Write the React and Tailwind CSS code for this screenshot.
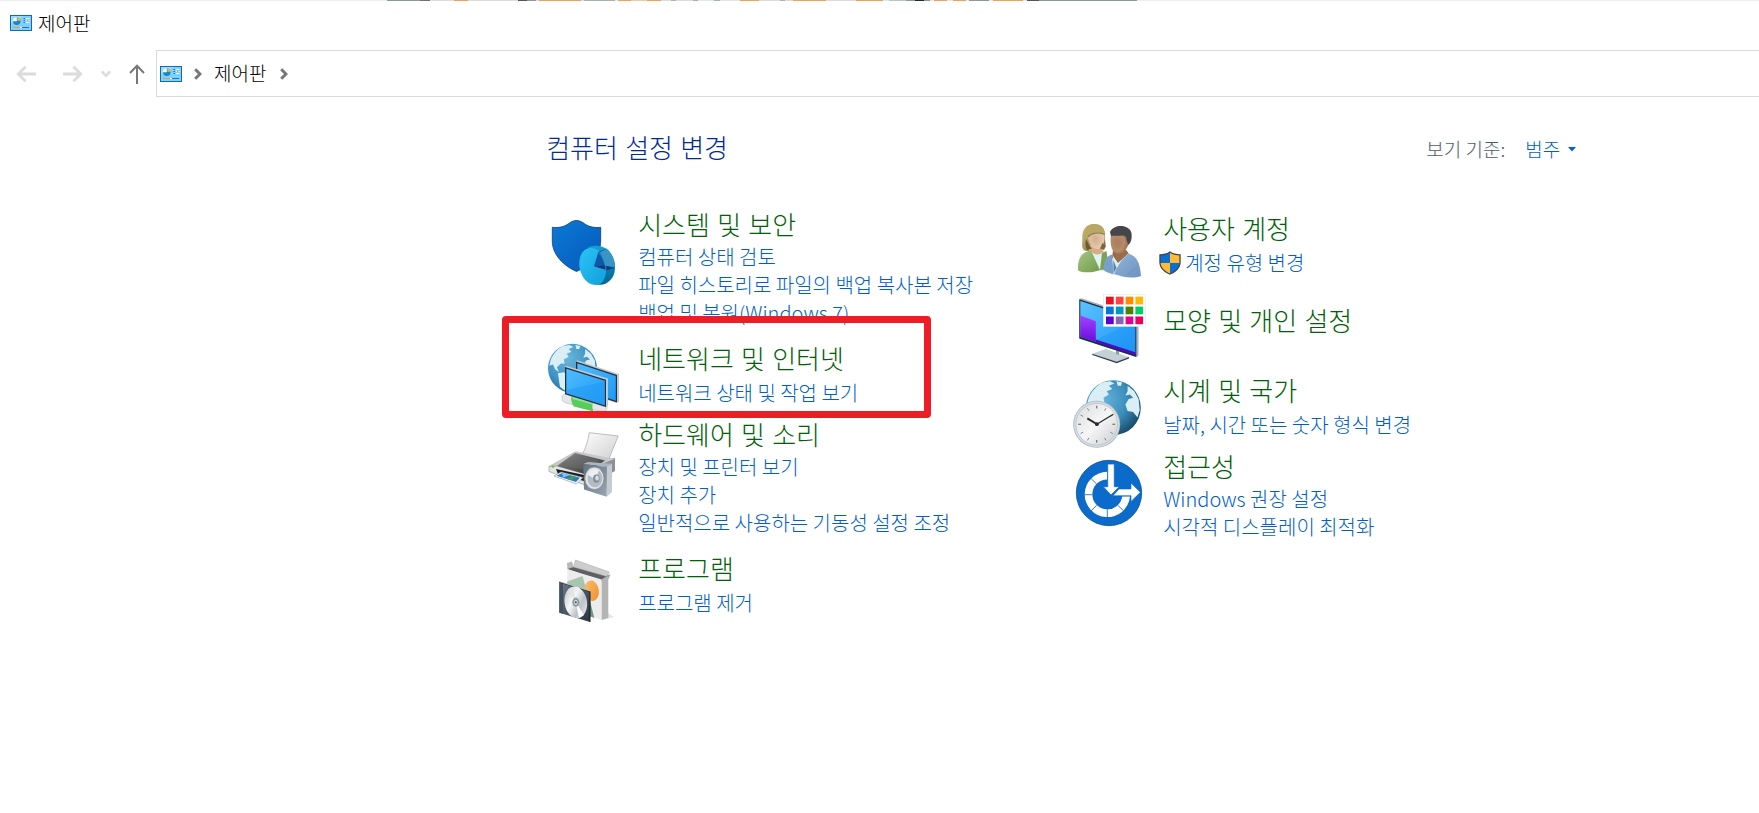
// src/App.jsx
import React from 'react';

// [x, width, color] of the strip behind the window's top edge
const edgeColors = [
  [0, 33, '#8a9a98'], [33, 10, '#77716e'], [43, 24, '#dcdcdc'], [67, 14, '#f3a055'], [81, 50, '#dcdcdc'],
  [131, 9, '#56565a'], [140, 9, '#8a9a98'], [149, 3, '#dcdcdc'], [152, 42, '#f3a055'], [194, 3, '#dcdcdc'],
  [197, 31, '#a3b3af'], [228, 3, '#e8e8e8'], [231, 13, '#f3a055'], [244, 16, '#f5c9a0'], [260, 14, '#f3a055'],
  [274, 10, '#dcdcdc'], [284, 5, '#a3b3af'], [289, 17, '#dcdcdc'], [306, 5, '#a3b3af'], [311, 16, '#e4e6e6'],
  [327, 6, '#a3b3af'], [333, 20, '#e4e4e4'], [353, 19, '#f3a055'], [372, 21, '#dcdcdc'], [393, 5, '#a3b3af'],
  [398, 8, '#dcdcdc'], [406, 33, '#f3a055'], [439, 30, '#dcdcdc'], [469, 27, '#f3a055'], [496, 6, '#e8e8e8'],
  [502, 17, '#b9c5c3'], [519, 9, '#8a9a98'], [528, 9, '#22282c'], [537, 6, '#8a9a98'], [543, 4, '#e8e8e8'],
  [547, 13, '#f3a055'], [560, 6, '#e8e8e8'], [566, 13, '#f3a055'], [579, 3, '#e8e8e8'], [582, 20, '#8a9a98'],
  [602, 4, '#e8e8e8'], [606, 30, '#f3a055'], [636, 4, '#e8e8e8'], [640, 12, '#56565a'], [652, 98, '#8a9a98'],
];

const PanelIcon = () => (
  <svg width="22" height="16" viewBox="0 0 22 16" className="shrink-0" aria-hidden="true">
    <rect width="22" height="16" fill="#0f6cae" />
    <rect x="1" y="1" width="20" height="14" fill="#7fd0fa" />
    <path d="M1 15V9L14 1H1Z" fill="#9bdcfc" />
    <circle cx="6.8" cy="6.3" r="3.7" fill="#1487d0" />
    <path d="M6.8 6.3V2.2A4.1 4.1 0 0 0 2.7 6.3Z" fill="#f4fbff" />
    <path d="M7.3 5.8V2.4A3.6 3.6 0 0 1 10.6 5.8Z" fill="#f9b13c" />
    <path d="M13.5 3.5H15M13.5 5.5H15M13.5 7.5H15" stroke="#1478bc" />
    <path d="M16 3.5H19.5M16 5.5H19.5M16 7.5H19.5" stroke="#e8f7ff" />
    <path d="M17 5.5H18.3" stroke="#f08b2c" />
    <path d="M3 12.5H10" stroke="#f29a2e" />
    <path d="M10 12.5H12" stroke="#fff" />
    <path d="M12 12.5H19" stroke="#1478bc" />
  </svg>
);

const Crumb = () => (
  <svg width="8" height="12" viewBox="0 0 8 12" fill="none" className="shrink-0" aria-hidden="true">
    <path d="M1.2 1.2L6 6L1.2 10.8" stroke="#777" strokeWidth="3" />
  </svg>
);

// Continents shared by both globe icons, drawn for a circle of radius 25 at the origin
const Land = () => (
  <g fill="#d9eff5">
    <path d="M-10 -23C-14 -21 -19 -16 -22 -10L-24 -3L-20 -4L-18 1L-14 4L-16 -1L-12 -5L-8 -5L-9 -9L-4 -12L-6 -15L-1 -17L-4 -20L1 -22L-3 -24Z" />
    <path d="M-15 5L-9 4L-4 8L-2 12L-6 18L-8 23L-13 19L-14 12Z" />
    <path d="M3 -24L8 -23L7 -20L4 -20Z" />
    <path d="M13 -20L19 -15L23 -8L24 2L22 9L18 4L13 3L11 -3L14 -8L18 -9L15 -12L11 -11L13 -15Z" />
  </g>
);

const Icon = ({ className, children }) => (
  <svg width="72" height="72" viewBox="0 0 72 72" className={`shrink-0 overflow-visible ${className}`} aria-hidden="true">
    {children}
  </svg>
);

const SystemIcon = (
  <>
    <defs>
      <linearGradient id="sysShield" x1="0" y1="0" x2="1" y2="1">
        <stop offset="0" stopColor="#0b79d6" />
        <stop offset="1" stopColor="#0559b8" />
      </linearGradient>
      <linearGradient id="sysPie" x1="0" y1="0" x2="1" y2="1">
        <stop offset="0" stopColor="#2bc4f6" />
        <stop offset="1" stopColor="#119fdc" />
      </linearGradient>
      <linearGradient id="sysEdge" x1="0" y1="0" x2="0" y2="1">
        <stop offset="0" stopColor="#12a0d8" />
        <stop offset="1" stopColor="#046390" />
      </linearGradient>
    </defs>
    <path d="M30.5 3.5C25 3.5 23 7.5 17 9.5C13 10.7 9 10.7 6.3 10.3V24C6.3 38 18 49 30.5 54.5C43 49 54.7 38 54.7 24V10.3C52 10.7 48 10.7 44 9.5C38 7.5 36 3.5 30.5 3.5Z" fill="url(#sysShield)" stroke="#0a3c74" strokeWidth=".8" />
    <path d="M42 30.5C46 28.5 53 28 58 30.5C65 34 69 42 69 50C69 58 66 63 60 66.5C57 68 53 68 50 67.5Z" fill="url(#sysEdge)" />
    <path d="M45 31C54 31 60.5 41 60.3 51C60 61 57 68 50 68C40 68 33.3 57 33.3 47C33.3 37 38 31 45 31Z" fill="url(#sysPie)" />
    <path d="M48 49.7L52.5 35L60.7 31.6L68 49Z" fill="#0c4a94" />
    <path d="M60.7 31.8C66 36 69 43 69 50L59 49C58.5 44 56 38 53.5 35.5Z" fill="#3796c4" />
    <path d="M48 49.7L52.6 36C57 40 59.5 45 60 51.5Z" fill="#0d59a8" />
    <path d="M48 49.7L60 53.5L68.5 51L59 48.5Z" fill="#083b84" />
    <path d="M48 49.7L60 53.3M52.5 35.5C57 40 59.5 46 60 53" stroke="#56b9ea" strokeWidth=".6" fill="none" />
  </>
);

const NetworkIcon = (
  <>
    <defs>
      <radialGradient id="netSea" cx=".4" cy=".3" r=".75">
        <stop offset="0" stopColor="#6bb5dc" />
        <stop offset=".6" stopColor="#3d94c6" />
        <stop offset="1" stopColor="#256d9c" />
      </radialGradient>
      <linearGradient id="netScreen" x1="0" y1="0" x2="1" y2="1">
        <stop offset="0" stopColor="#4fbcff" />
        <stop offset="1" stopColor="#1e9af6" />
      </linearGradient>
    </defs>
    <circle cx="26.5" cy="25.3" r="24.5" fill="url(#netSea)" />
    <g transform="translate(26.5 25.3) scale(.97)"><Land /></g>
    <path d="M30 18L32 17.5L73 31V59L70.5 60L30 47Z" fill="#c3c9cd" />
    <path d="M30 18.5L71 32V59.5L30 46Z" fill="#233240" />
    <path d="M31.3 20.3L69.8 33V57.8L31.3 45Z" fill="url(#netScreen)" />
    <path d="M16 55C16 51 19 50 23 51L58 61C61 62 62 64 60 67L58 69L20 60C17 59 16 58 16 55Z" fill="#e4e7e8" stroke="#b3b9bc" strokeWidth=".6" />
    <path d="M26 52L48 57.5C46 60 46 65 47.5 68.5L28 63.5C25 60 24.5 55 26 52Z" fill="#56cd5a" />
    <path d="M26.5 55L46.5 60.5" stroke="#8be48a" strokeWidth="2" />
    <path d="M19 23.5L21 23L62 35.5V63L59.5 64.5L19 51.5Z" fill="#c3c9cd" />
    <path d="M19 24L60 36.8V64L19 51.2Z" fill="#233240" />
    <path d="M20.3 25.7L58.8 37.7V62.3L20.3 50.2Z" fill="url(#netScreen)" />
    <path d="M20.3 50.2V47L57 39V37.2L58.8 37.7V62.3Z" fill="#1f97f2" opacity=".5" />
  </>
);

const HardwareIcon = (
  <>
    <defs>
      <linearGradient id="hwPaper" x1="0" y1="0" x2="1" y2="1">
        <stop offset="0" stopColor="#fdfdfd" />
        <stop offset="1" stopColor="#cfcfcf" />
      </linearGradient>
      <linearGradient id="hwBody" x1="0" y1="0" x2="1" y2="1">
        <stop offset="0" stopColor="#8f8f8f" />
        <stop offset="1" stopColor="#2d2d2d" />
      </linearGradient>
      <linearGradient id="hwSpeaker" x1="0" y1="0" x2="1" y2="1">
        <stop offset="0" stopColor="#65727e" />
        <stop offset="1" stopColor="#98a6b2" />
      </linearGradient>
    </defs>
    <path d="M43.3 3.7L72.3 7C69 15 65 24 62.3 32L36.5 25C40 19 42 11 43.3 3.7Z" fill="url(#hwPaper)" stroke="#a5a5a5" strokeWidth=".7" />
    <path d="M56 31L69 29V42L60 47Z" fill="#8d9092" />
    <path d="M3 37L28 23C30 22.3 32 22.6 34 23.2L69 30L58 34L40 46.5L3 40Z" fill="#c5c7c8" />
    <path d="M3 37.5L11 37L39 45V56L3 42.5Z" fill="#e3e4e4" stroke="#909090" strokeWidth=".6" />
    <path d="M11 37L29 24L59 31.5L39 45Z" fill="url(#hwBody)" />
    <path d="M17 36L31 26L54 31.5L39 41Z" fill="#6e6e6e" opacity=".45" />
    <path d="M10 40L38 46V52L12 45Z" fill="#1b1c1d" />
    <circle cx="7" cy="37.6" r="1.4" fill="#83c044" />
    <path d="M8 47L15 43L37 48.5L30.5 55Z" fill="#f5f8fa" stroke="#8d9397" strokeWidth=".6" />
    <path d="M10.5 46.8L16 44L34 48.7L30 53Z" fill="#3478bd" />
    <path d="M16 44L24 46L17 48.5Z" fill="#82c4ef" />
    <path d="M26 47L30 48L26 51L21 50Z" fill="#43a04d" />
    <path d="M60 37.5L66 34.5V63L60.7 67.7Z" fill="#c4ccd2" />
    <path d="M37.3 35L42 33L66 34.7L61 38Z" fill="#aab6bf" />
    <path d="M37.3 35L61 38L60.7 67.7L38 60.5Z" fill="url(#hwSpeaker)" />
    <ellipse cx="48.4" cy="49.3" rx="9.6" ry="11.2" fill="#e0e4e8" stroke="#717c87" strokeWidth=".6" />
    <ellipse cx="49" cy="49.3" rx="7.4" ry="9" fill="#b3bcc4" />
    <path d="M42 46L49 50L53 41.5A7.4 9 0 0 0 42 46Z" fill="#edf0f2" />
    <ellipse cx="50.3" cy="49.6" rx="3.2" ry="4.2" fill="#838e99" />
    <ellipse cx="51" cy="49" rx="1.8" ry="2.6" fill="#d9dee2" />
  </>
);

const ProgramsIcon = (
  <>
    <defs>
      <linearGradient id="progDisc" x1="0" y1="0" x2="1" y2="1">
        <stop offset="0" stopColor="#b8bdc1" />
        <stop offset=".4" stopColor="#f6f8f9" />
        <stop offset=".65" stopColor="#bcc3c7" />
        <stop offset="1" stopColor="#f0f2f3" />
      </linearGradient>
      <linearGradient id="progCase" x1="0" y1="0" x2="1" y2="1">
        <stop offset="0" stopColor="#6b7986" />
        <stop offset="1" stopColor="#2b3641" />
      </linearGradient>
      <linearGradient id="progSpot" x1="0" y1="0" x2="1" y2="1">
        <stop offset="0" stopColor="#f9c06d" />
        <stop offset="1" stopColor="#ee8f2c" />
      </linearGradient>
    </defs>
    <path d="M56 65L68 62L62 58Z" fill="#e6e6e6" />
    <path d="M21.3 14L21 8L26 6.5L28 13Z" fill="#b9b9b9" />
    <path d="M21.3 14L28 12L62.3 20V23L55.7 26Z" fill="#5d5f60" />
    <path d="M29.5 5L63.3 17L61 21.5L27.5 12Z" fill="#cdcdcd" stroke="#a4a4a4" strokeWidth=".5" />
    <path d="M55.7 24.3L61.5 20.5L64.5 19L62.8 23.5L56 28Z" fill="#a2a2a2" />
    <path d="M21.3 14.3L55.7 24.5V65L21.3 55Z" fill="#ececec" />
    <path d="M55.7 24.5L62.3 21.5V63L55.7 65Z" fill="#b4b4b4" />
    <path d="M21.3 26.5L36.5 21L48.5 63L21.3 55Z" fill="#a6c4ae" />
    <path d="M34 45L43 42L48 62.5L40 60Z" fill="#6f987e" />
    <ellipse cx="45.7" cy="35.8" rx="7.2" ry="10.3" fill="url(#progSpot)" transform="rotate(-8 45.7 35.8)" />
    <path d="M13.3 27L44 36.5V67L13.3 57.7Z" fill="url(#progCase)" />
    <path d="M13.3 27L17 28V58.8L13.3 57.7Z" fill="#44505b" />
    <path d="M13.3 27L44 36.5V67" fill="none" stroke="#14191e" strokeWidth="1" />
    <path d="M13.3 26.6L44 36" fill="none" stroke="#ccd3d8" strokeWidth=".8" />
    <ellipse cx="29.8" cy="47.3" rx="11.2" ry="16" fill="url(#progDisc)" transform="rotate(-9 29.8 47.3)" />
    <path d="M29.8 47.3L22 35L27 32Z" fill="#dfe5df" />
    <path d="M29.8 47.3L38 60L33 63Z" fill="#fff" />
    <ellipse cx="29.8" cy="47.3" rx="3.6" ry="4.7" fill="#9aa5ac" />
    <ellipse cx="29.8" cy="47.3" rx="2.3" ry="3.1" fill="#dce1e4" stroke="#5a6670" strokeWidth=".6" />
    <circle cx="29.8" cy="47.3" r="1" fill="#384550" />
  </>
);

const UsersIcon = (
  <>
    <defs>
      <linearGradient id="userHair" x1="0" y1="0" x2="1" y2="1">
        <stop offset="0" stopColor="#d0c07a" />
        <stop offset="1" stopColor="#75663a" />
      </linearGradient>
      <linearGradient id="userGreen" x1="0" y1="0" x2="1" y2="1">
        <stop offset="0" stopColor="#a5c684" />
        <stop offset="1" stopColor="#719b49" />
      </linearGradient>
      <linearGradient id="userBlue" x1="0" y1="0" x2="1" y2="1">
        <stop offset="0" stopColor="#93b4da" />
        <stop offset="1" stopColor="#6c92bf" />
      </linearGradient>
      <radialGradient id="userFace" cx=".45" cy=".45" r=".7">
        <stop offset="0" stopColor="#d3ad8c" />
        <stop offset="1" stopColor="#ecd2b8" />
      </radialGradient>
      <radialGradient id="userSkin" cx=".35" cy=".5" r=".75">
        <stop offset="0" stopColor="#a77d5e" />
        <stop offset=".5" stopColor="#b58b69" />
        <stop offset="1" stopColor="#7c5230" />
      </radialGradient>
    </defs>
    <path d="M23 11C14 11 11 18 11.3 25C11.5 31 10 35 13.5 37.5C20 40 30 38 34.5 33C35 31 34 29 34 24C34 16 31 11 23 11Z" fill="url(#userHair)" />
    <path d="M19 32H29L34 41L27 50L17 40Z" fill="#d6ad88" />
    <path d="M17 22C18 18 28 16 33 20C35 26 32 36 27 36C21 36 17 30 17 22Z" fill="url(#userFace)" />
    <path d="M16 25.5C18 20 28 17 34 21.5C34 15 30 11 23 11C16 11 13 18 14 26Z" fill="#b8a864" />
    <path d="M17 24C20 20 28 18.5 33.8 21.5" stroke="#8f8048" strokeWidth="1.4" fill="none" />
    <path d="M15.5 26C17 31 19 34 21 35.5L16 37C14 34 14 29 15.5 26Z" fill="#6f5b32" />
    <path d="M31.5 30L35 33L33 37L29 35.5Z" fill="#7a683b" />
    <path d="M21 39C25 43 30 42 33 38L35 58H26Z" fill="#e1f0f1" />
    <path d="M7 57.5C6.5 50 8 42 15 39L20 37.5L29 57L24 58.5C18 60 10 59.5 7 57.5Z" fill="url(#userGreen)" />
    <path d="M29 57L31 40L35.5 38L38 56Z" fill="#7aa352" />
    <path d="M42 37H55L60 43L50 55L41 45Z" fill="#9a6c48" />
    <path d="M40 22C43 17 56 17 58.5 26C58 34 53 41 47 41C41 40 38.5 32 40 22Z" fill="url(#userSkin)" />
    <path d="M39 19C43 11 58 11 60.5 20C61 25 60.5 29 57.5 32L55.5 27C56 24 54 22 51 22.5C47 23 42 22.5 40 23Z" fill="#45464a" />
    <path d="M42 43L47 50L58 40L52 62H40Z" fill="#dceef4" />
    <path d="M32.5 57C32.5 49 35 43 41 41.5L42.5 61Q36 60 32.5 57Z" fill="#799fcc" />
    <path d="M43 61C47 52 52 44 58 41C66 43 69 50 70 63C61 66 51 64 43 61Z" fill="url(#userBlue)" />
    <path d="M42.3 47L42.6 60L45.5 55Z" fill="#5a7da5" />
    <path d="M57 61C61 58 64 56 66 54" stroke="#648ab8" strokeWidth=".7" fill="none" />
  </>
);

const swatches = [
  ['#e81123', '#ff4343', '#ff8c00', '#ffb900'],
  ['#0078d7', '#0099bc', '#498205', '#00cc6a'],
  ['#5a00d0', '#8764b8', '#e3008c', '#ea005e'],
];

const AppearanceIcon = (
  <>
    <defs>
      <linearGradient id="appScreen" x1="0" y1="0" x2="1" y2="1">
        <stop offset="0" stopColor="#5bc3ff" />
        <stop offset="1" stopColor="#1c93f5" />
      </linearGradient>
      <linearGradient id="appPurple" x1="0" y1="0" x2="0" y2="1">
        <stop offset="0" stopColor="#a343ff" />
        <stop offset="1" stopColor="#6a0bdc" />
      </linearGradient>
    </defs>
    <path d="M21.3 60.8L34.7 56L58 64L45.7 69.3Z" fill="#c4cfd6" />
    <path d="M21.3 60.8L45.7 68.7L58 64V65.5L45.7 70.2L21.3 62Z" fill="#35424d" />
    <path d="M45 56H48V62L45 61Z" fill="#8e9ca7" />
    <path d="M8.3 6L10.5 5.3L67.5 24V62.5L65.3 64L8.3 45.5Z" fill="#a7b3bc" />
    <path d="M8.3 6.3L65.3 25V64L8.3 45.5Z" fill="#1d2d42" />
    <path d="M9.3 8L64.3 26V61.5L9.3 43.8Z" fill="url(#appScreen)" />
    <path d="M25 47L64.3 28V61.5L9.3 43.8Z" fill="#1b93f4" opacity=".4" />
    <path d="M9.3 22.5L24.8 28.3V48.7L9.3 43.8Z" fill="url(#appPurple)" />
    <path d="M24.8 46.5L64.3 59.3V62.3L24.8 49Z" fill="#4d08c5" />
    <rect x="32.3" y="1.5" width="42" height="32" fill="#fff" stroke="#dce3e8" strokeWidth=".5" />
    {swatches.map((row, r) =>
      row.map((color, c) => <rect key={color} x={35 + c * 9.8} y={3.7 + r * 9.9} width="7.7" height="7.7" fill={color} />)
    )}
  </>
);

const ClockIcon = (
  <>
    <defs>
      <radialGradient id="clkSea" cx=".35" cy=".35" r=".75">
        <stop offset="0" stopColor="#63b1db" />
        <stop offset=".55" stopColor="#3a8ebb" />
        <stop offset="1" stopColor="#15425f" />
      </radialGradient>
      <linearGradient id="clkFace" x1="0" y1="0" x2="1" y2="1">
        <stop offset="0" stopColor="#dadcdf" />
        <stop offset=".5" stopColor="#f6f6f7" />
        <stop offset="1" stopColor="#c9cccf" />
      </linearGradient>
    </defs>
    <circle cx="42.3" cy="30.7" r="27.5" fill="url(#clkSea)" />
    <g transform="translate(42.3 30.7) scale(1.1)"><Land /></g>
    <circle cx="25.7" cy="47.3" r="23.5" fill="#a9b8c4" />
    <circle cx="25.7" cy="47.3" r="22.7" fill="#d5dde2" />
    <circle cx="25.7" cy="47.3" r="20.8" fill="url(#clkFace)" stroke="#a5adb4" strokeWidth=".5" />
    {[0, 30, 60, 90, 120, 150, 180, 210, 240, 270, 300, 330].map(deg => (
      <path key={deg} d="M25.7 28.8V31.6" stroke="#777b80" strokeWidth={deg % 90 ? 0.8 : 1.3} transform={`rotate(${deg} 25.7 47.3)`} />
    ))}
    <path d="M26.5 47.5L16.3 41.3" stroke="#2a2a2a" strokeWidth="2" />
    <path d="M25 47.7L42.3 37.3" stroke="#2a2a2a" strokeWidth="1.3" />
    <circle cx="25.9" cy="47.2" r="1.9" fill="#2a2a2a" />
  </>
);

const AccessIcon = (
  <>
    <circle cx="38" cy="36" r="32.7" fill="#0a6bca" stroke="#0b4f92" strokeWidth=".8" />
    <path d="M59 39.5A22.7 22.7 0 1 1 36.3 14.7V22.4A15 15 0 1 0 51.2 39.5Z" fill="#fff" />
    <path d="M20.2 21.7L25.7 27.1M13.6 37.7H21.3M20.2 53.7L25.7 48.3M36.3 60.4V52.7M52.4 53.7L46.9 48.3" stroke="#0a5cae" strokeWidth=".8" />
    <path d="M42 38.7L48 32H60V26L69.3 35.3L60 44.6V38.7Z" fill="#fff" stroke="#0a6bca" strokeWidth=".6" />
    <path d="M36.7 7H43.3V29.7H48.3L40 38L32.3 29.7H36.7Z" fill="#fff" stroke="#0a6bca" strokeWidth=".8" />
  </>
);

const ShieldIcon = () => (
  <svg width="22" height="24" viewBox="0 0 22 24" className="shrink-0" aria-hidden="true">
    <path d="M11 .3C8 2.6 4 3.4 .3 3.3V11C.3 17.5 5.5 21.5 11 23.8C16.5 21.5 21.7 17.5 21.7 11V3.3C18 3.4 14 2.6 11 .3Z" fill="#42444a" />
    <path d="M11 1.8C8.4 3.6 5 4.4 1.6 4.5V12H11Z" fill="#0b6fd0" />
    <path d="M11 1.8C13.6 3.6 17 4.4 20.4 4.5V12H11Z" fill="#fdbb37" />
    <path d="M11 12H1.6C2 17 6.5 20.5 11 22.5Z" fill="#fdbb37" />
    <path d="M11 12H20.4C20 17 15.5 20.5 11 22.5Z" fill="#0b6fd0" />
  </svg>
);

const leftColumn = [
  {
    title: '시스템 및 보안',
    links: ['컴퓨터 상태 검토', '파일 히스토리로 파일의 백업 복사본 저장', '백업 및 복원(Windows 7)'],
    icon: SystemIcon, row: '', iconClass: 'mt-2', listClass: '',
  },
  {
    title: '네트워크 및 인터넷',
    links: ['네트워크 상태 및 작업 보기'],
    icon: NetworkIcon, row: 'mt-4', iconClass: '', listClass: 'mt-0.5', marked: true,
  },
  {
    title: '하드웨어 및 소리',
    links: ['장치 및 프린터 보기', '장치 추가', '일반적으로 사용하는 기동성 설정 조정'],
    icon: HardwareIcon, row: 'mt-1', iconClass: 'mt-2.5', listClass: '',
  },
  {
    title: '프로그램',
    links: ['프로그램 제거'],
    icon: ProgramsIcon, row: 'mt-4', iconClass: 'mt-0.5', listClass: 'mt-0.5',
  },
];

const rightColumn = [
  {
    title: '사용자 계정',
    links: ['계정 유형 변경'],
    icon: UsersIcon, row: 'mt-1', iconClass: '', listClass: 'mt-0.5', shield: true,
  },
  {
    title: '모양 및 개인 설정',
    links: [],
    icon: AppearanceIcon, row: 'mt-2', iconClass: '', listClass: '', textClass: 'mt-3',
  },
  {
    title: '시계 및 국가',
    links: ['날짜, 시간 또는 숫자 형식 변경'],
    icon: ClockIcon, row: 'mt-2.5', iconClass: 'mt-0.5', listClass: 'mt-0.5',
  },
  {
    title: '접근성',
    links: ['Windows 권장 설정', '시각적 디스플레이 최적화'],
    icon: AccessIcon, row: 'mt-0.5', iconClass: 'mt-1.5', listClass: '',
  },
];

const Category = ({ item }) => (
  <section className={`relative flex items-start gap-5 ${item.row}`}>
    <Icon className={item.iconClass}>{item.icon}</Icon>
    <div className={`whitespace-nowrap ${item.textClass || ''}`}>
      <h2 className="font-['Liberation_Sans','Noto_Sans_CJK_KR',sans-serif] text-[26px] leading-[34px] font-light">
        <a href="#" className="text-[#006208] hover:underline">{item.title}</a>
      </h2>
      <ul className={`text-xl leading-7 text-[#005fc8] ${item.listClass}`}>
        {item.links.map(link => (
          <li key={link}>
            {item.shield ? (
              <a href="#" className="-ml-1 flex items-center gap-1 hover:underline">
                <ShieldIcon />
                {link}
              </a>
            ) : (
              <a href="#" className="hover:underline">{link}</a>
            )}
          </li>
        ))}
      </ul>
    </div>
    {item.marked && (
      <div className="pointer-events-none absolute -top-[27px] -left-11 h-[102px] w-[429px] rounded-sm border-[7px] border-[#ee1c25]" />
    )}
  </section>
);

const App = () => {
  return (
    <div className="min-h-screen overflow-hidden bg-white font-['Noto_Sans_CJK_KR','Noto_Sans',sans-serif] font-light text-black">
      <div className="h-px bg-[#eeeeee] pl-[22%]">
        <svg width="750" height="1" className="block" aria-hidden="true">
          {edgeColors.map(([x, width, fill]) => (
            <rect key={x} x={x} y="0" width={width} height="1" fill={fill} />
          ))}
        </svg>
      </div>

      {/* Title bar */}
      <header className="flex h-[49px] items-start gap-1.5 px-2.5 pt-[7px] text-[19px] leading-[30px]">
        <div className="flex h-[30px] items-center"><PanelIcon /></div>
        <span>제어판</span>
      </header>

      {/* Navigation bar */}
      <nav className="flex h-[47px] items-center">
        <div className="flex w-39 shrink-0 items-center pl-4">
          <button type="button" aria-label="뒤로" disabled className="w-[46px]">
            <svg width="21" height="18" viewBox="0 0 21 18" fill="none" stroke="#dcdcdc" strokeWidth="2.8">
              <path d="M20 9H2.5M9.5 1.8L2.3 9L9.5 16.2" />
            </svg>
          </button>
          <button type="button" aria-label="앞으로" disabled className="w-[39px]">
            <svg width="21" height="18" viewBox="0 0 21 18" fill="none" stroke="#dcdcdc" strokeWidth="2.8">
              <path d="M1 9H18.5M11.5 1.8L18.7 9L11.5 16.2" />
            </svg>
          </button>
          <button type="button" aria-label="최근 위치" disabled className="w-7">
            <svg width="10" height="8" viewBox="0 0 10 8" fill="none" stroke="#dcdcdc" strokeWidth="2.6">
              <path d="M.8 1.5L5 5.7L9.2 1.5" />
            </svg>
          </button>
          <button type="button" aria-label="위로">
            <svg width="16" height="20" viewBox="0 0 16 20" fill="none" stroke="#777" strokeWidth="2">
              <path d="M8 20V2M1 9L8 1.8L15 9" />
            </svg>
          </button>
        </div>
        <div className="flex h-full flex-1 items-center gap-3 border border-r-0 border-[#d9d9d9] pl-[3px] text-[19px] leading-7">
          <PanelIcon />
          <Crumb />
          <button type="button" className="pr-0.5 pb-0.5">제어판</button>
          <Crumb />
        </div>
      </nav>

      <main className="pt-9 pl-[31.05%]">
        <div className="max-w-[1050px]">
          <div className="flex items-center justify-between pr-5">
            <h1 className="font-['Liberation_Sans','Noto_Sans_CJK_KR',sans-serif] text-[26px] leading-8 text-[#002d93]">컴퓨터 설정 변경</h1>
            <div className="flex items-center gap-5 text-[19px] leading-7 text-[#4f5b6c]">
              <span>보기 기준:</span>
              <button type="button" className="flex items-center gap-2 text-[#005fc8]">
                범주
                <svg width="8" height="5" viewBox="0 0 8 5" aria-hidden="true">
                  <path d="M0 0H8L4 4.5Z" fill="#0066cc" />
                </svg>
              </button>
            </div>
          </div>

          <div className="mt-11 grid grid-cols-2">
            <div>
              {leftColumn.map(item => <Category key={item.title} item={item} />)}
            </div>
            <div>
              {rightColumn.map(item => <Category key={item.title} item={item} />)}
            </div>
          </div>
        </div>
      </main>
    </div>
  );
};

export default App;
